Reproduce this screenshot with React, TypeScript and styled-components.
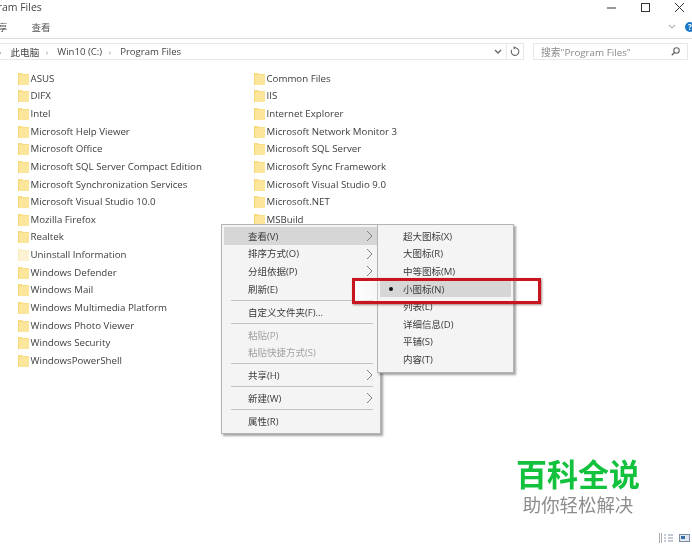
import styled, { createGlobalStyle } from "styled-components";

const leftFolders = [
  "ASUS",
  "DIFX",
  "Intel",
  "Microsoft Help Viewer",
  "Microsoft Office",
  "Microsoft SQL Server Compact Edition",
  "Microsoft Synchronization Services",
  "Microsoft Visual Studio 10.0",
  "Mozilla Firefox",
  "Realtek",
  "Uninstall Information",
  "Windows Defender",
  "Windows Mail",
  "Windows Multimedia Platform",
  "Windows Photo Viewer",
  "Windows Security",
  "WindowsPowerShell",
];

const rightFolders = [
  "Common Files",
  "IIS",
  "Internet Explorer",
  "Microsoft Network Monitor 3",
  "Microsoft SQL Server",
  "Microsoft Sync Framework",
  "Microsoft Visual Studio 9.0",
  "Microsoft.NET",
  "MSBuild",
];

type MenuEntry =
  | { kind: "item"; label: string; arrow?: boolean; disabled?: boolean; active?: boolean }
  | { kind: "sep" };

const mainMenu: MenuEntry[] = [
  { kind: "item", label: "查看(V)", arrow: true, active: true },
  { kind: "item", label: "排序方式(O)", arrow: true },
  { kind: "item", label: "分组依据(P)", arrow: true },
  { kind: "item", label: "刷新(E)" },
  { kind: "sep" },
  { kind: "item", label: "自定义文件夹(F)..." },
  { kind: "sep" },
  { kind: "item", label: "粘贴(P)", disabled: true },
  { kind: "item", label: "粘贴快捷方式(S)", disabled: true },
  { kind: "sep" },
  { kind: "item", label: "共享(H)", arrow: true },
  { kind: "sep" },
  { kind: "item", label: "新建(W)", arrow: true },
  { kind: "sep" },
  { kind: "item", label: "属性(R)" },
];

const subMenu = [
  "超大图标(X)",
  "大图标(R)",
  "中等图标(M)",
  "小图标(N)",
  "列表(L)",
  "详细信息(D)",
  "平铺(S)",
  "内容(T)",
];

const GlobalStyle = createGlobalStyle`
  html, body {
    margin: 0;
    padding: 0;
    background: #fff;
  }
  body {
    font-family: "Open Sans", "Noto Sans CJK SC", sans-serif;
    color: #333;
  }
`;

const Page = styled.div`
  position: relative;
  width: 692px;
  height: 548px;
  overflow: hidden;
  background: #fff;
  filter: blur(0.35px);
`;

const TitleBar = styled.div`
  display: flex;
  align-items: center;
  justify-content: space-between;
  height: 14px;
  padding-right: 8px;
`;

const Title = styled.div`
  margin-left: -25px;
  font-size: 10.5px;
  color: #444;
`;

const WindowButtons = styled.div`
  display: flex;
  align-items: center;
  gap: 25px;
  color: #333;
`;

const RibbonTabs = styled.div`
  display: flex;
  align-items: center;
  justify-content: space-between;
  height: 25px;
  padding-top: 1px;
  box-sizing: border-box;
  border-bottom: 1px solid #dcdcdc;
`;

const TabGroup = styled.div`
  display: flex;
  gap: 24px;
  margin-left: -2px;
  font-size: 9.5px;
  color: #555;
`;

const HelpGroup = styled.div`
  display: flex;
  align-items: center;
  gap: 9px;
  margin-right: -3px;
`;

const HelpBadge = styled.div`
  width: 10px;
  height: 10px;
  border-radius: 50%;
  background: #1877c9;
  color: #fff;
  font-size: 8px;
  font-weight: 700;
  line-height: 10px;
  text-align: center;
`;

const NavRow = styled.div`
  display: flex;
  align-items: stretch;
  gap: 9px;
  height: 17px;
  margin-top: 4px;
  padding-right: 4px;
`;

const AddressBar = styled.div`
  flex: 1;
  display: flex;
  align-items: center;
  border: 1px solid #e8e8e8;
  border-left: none;
  font-size: 9.6px;
  color: #444;
`;

const Crumbs = styled.div`
  flex: 1;
  display: flex;
  align-items: center;
  gap: 7.5px;
`;

const CrumbArrow = styled.span`
  width: 4px;
  margin-left: -1px;
  color: #888;
  font-size: 8px;
`;

const AddressTools = styled.div`
  display: flex;
  align-items: center;
  height: 100%;
  color: #666;
`;

const AddressTool = styled.div<{ $divided?: boolean }>`
  display: flex;
  align-items: center;
  justify-content: center;
  width: 16px;
  height: 100%;
  border-left: ${(p) => (p.$divided ? "1px solid #e8e8e8" : "none")};
`;

const SearchBox = styled.div`
  display: flex;
  align-items: center;
  justify-content: space-between;
  width: 155px;
  padding: 0 7px;
  box-sizing: border-box;
  border: 1px solid #e8e8e8;
  font-size: 9.8px;
  color: #8a8a8a;
`;

const FileArea = styled.div`
  display: grid;
  grid-template-columns: 236px 236px;
  padding: 9.5px 0 0 18px;
`;

const FileColumn = styled.div`
  display: flex;
  flex-direction: column;
`;

const FileRow = styled.div<{ $faded?: boolean }>`
  display: flex;
  align-items: center;
  gap: 1.5px;
  height: 17.625px;
  font-size: 9.7px;
  color: #3c3c3c;
  white-space: nowrap;

  svg {
    opacity: ${(p) => (p.$faded ? 0.45 : 1)};
  }
`;

const Menu = styled.div`
  position: absolute;
  box-sizing: border-box;
  background: #f4f4f4;
  border: 1px solid #b4b4b4;
  box-shadow: 2px 2px 2px rgba(90, 90, 90, 0.55);
  font-size: 9.5px;
  color: #3a3a3a;
`;

const ContextMenu = styled(Menu)`
  left: 221px;
  top: 224px;
  width: 160px;
  height: 210px;
  padding: 2px;
`;

const SubMenu = styled(Menu)`
  left: 377px;
  top: 224px;
  width: 137px;
  height: 149px;
  padding: 2px;
`;

const MenuItem = styled.div<{ $active?: boolean; $disabled?: boolean }>`
  position: relative;
  display: flex;
  align-items: center;
  height: 17.6px;
  padding-left: 24px;
  background: ${(p) => (p.$active ? "#d6d6d6" : "transparent")};
  color: ${(p) => (p.$disabled ? "#a2a2a2" : "inherit")};
`;

const Separator = styled.div`
  height: 1px;
  margin: 2.2px 5px 2.2px 7px;
  background: #c2c2c2;
`;

const Arrow = styled.svg`
  position: absolute;
  right: 5px;
  top: 3px;
`;

const SubItem = styled.div<{ $active?: boolean }>`
  position: relative;
  display: flex;
  align-items: center;
  height: 17.6px;
  padding-left: 23px;
  background: ${(p) => (p.$active ? "#d6d6d6" : "transparent")};
`;

const Bullet = styled.span`
  position: absolute;
  left: 9px;
  top: 7px;
  width: 4px;
  height: 4px;
  border-radius: 50%;
  background: #111;
`;

const Highlight = styled.div`
  position: absolute;
  left: 352px;
  top: 278px;
  width: 189px;
  height: 26px;
  box-sizing: border-box;
  border: 3px solid #c8141e;
  box-shadow: 1px 1px 2px rgba(110, 60, 60, 0.6);
  background: linear-gradient(to right, rgba(255, 255, 255, 0.75) 0, rgba(255, 255, 255, 0.3) 22px, transparent 24px);
`;

const Watermark = styled.div`
  position: absolute;
  left: 516px;
  top: 454px;
  width: 124px;
  text-align: center;
`;

const WatermarkTitle = styled.div`
  font-family: "Noto Sans CJK SC", sans-serif;
  font-size: 31px;
  font-weight: 700;
  line-height: 38px;
  color: #12c13c;
  white-space: nowrap;
`;

const WatermarkSub = styled.div`
  font-family: "Noto Sans CJK SC", sans-serif;
  font-size: 18.4px;
  line-height: 24px;
  color: #8d8d8d;
  white-space: nowrap;
`;

const StatusIcons = styled.div`
  position: absolute;
  right: 2px;
  top: 533px;
  display: flex;
  gap: 5px;
`;

const FolderIcon = () => (
  <svg width="11" height="13" viewBox="0 0 11 13">
    <path d="M0 1h4l1 1h6v11H0z" fill="#f9dd84" />
    <path d="M1 3h10v10H1z" fill="#fce69c" />
    <path d="M0 1h1v12H0z" fill="#f3d675" />
  </svg>
);

const FolderList = ({ names }: { names: string[] }) => (
  <FileColumn>
    {names.map((name) => (
      <FileRow key={name} $faded={name === "Uninstall Information"}>
        <FolderIcon />
        {name}
      </FileRow>
    ))}
  </FileColumn>
);

const Chevron = () => (
  <Arrow width="7" height="12" viewBox="0 0 7 12">
    <path d="M1 1l5 5-5 5" fill="none" stroke="#808080" strokeWidth="1" />
  </Arrow>
);

const App = () => {
  return (
    <Page>
      <GlobalStyle />
      <TitleBar>
        <Title>Program Files</Title>
        <WindowButtons>
          <svg width="9" height="9" viewBox="0 0 9 9">
            <path d="M0 5h9" stroke="#333" strokeWidth="1" />
          </svg>
          <svg width="9" height="9" viewBox="0 0 9 9">
            <rect x="0.5" y="0.5" width="8" height="8" fill="none" stroke="#333" />
          </svg>
          <svg width="9" height="9" viewBox="0 0 9 9">
            <path d="M0 0l9 9M9 0l-9 9" stroke="#333" strokeWidth="1" />
          </svg>
        </WindowButtons>
      </TitleBar>
      <RibbonTabs>
        <TabGroup>
          <span>享</span>
          <span>查看</span>
        </TabGroup>
        <HelpGroup>
          <svg width="8" height="5" viewBox="0 0 8 5">
            <path d="M1 1l3 3 3-3" fill="none" stroke="#bbb" strokeWidth="1.2" />
          </svg>
          <HelpBadge>?</HelpBadge>
        </HelpGroup>
      </RibbonTabs>
      <NavRow>
        <AddressBar>
          <Crumbs>
            <CrumbArrow>›</CrumbArrow>
            <span>此电脑</span>
            <CrumbArrow>›</CrumbArrow>
            <span>Win10 (C:)</span>
            <CrumbArrow>›</CrumbArrow>
            <span>Program Files</span>
          </Crumbs>
          <AddressTools>
            <AddressTool>
              <svg width="8" height="5" viewBox="0 0 8 5">
                <path d="M1 1l3 3 3-3" fill="none" stroke="#666" strokeWidth="1.3" />
              </svg>
            </AddressTool>
            <AddressTool $divided>
              <svg width="10" height="11" viewBox="0 0 10 11">
                <path d="M5 1.8a3.8 3.8 0 1 1-3.3 2" fill="none" stroke="#666" strokeWidth="1.1" />
                <path d="M3.6 0l2.4 1.8-2.4 1.8z" fill="#666" />
              </svg>
            </AddressTool>
          </AddressTools>
        </AddressBar>
        <SearchBox>
          <span>搜索"Program Files"</span>
          <svg width="9" height="9" viewBox="0 0 9 9">
            <circle cx="5.5" cy="3.5" r="2.7" fill="none" stroke="#666" strokeWidth="1.1" />
            <path d="M3.5 5.5L0.8 8.2" stroke="#666" strokeWidth="1.4" />
          </svg>
        </SearchBox>
      </NavRow>
      <FileArea>
        <FolderList names={leftFolders} />
        <FolderList names={rightFolders} />
      </FileArea>

      <ContextMenu>
        {mainMenu.map((entry, i) =>
          entry.kind === "sep" ? (
            <Separator key={i} />
          ) : (
            <MenuItem key={entry.label} $active={entry.active} $disabled={entry.disabled}>
              {entry.label}
              {entry.arrow && <Chevron />}
            </MenuItem>
          ),
        )}
      </ContextMenu>
      <SubMenu>
        {subMenu.map((label) => (
          <SubItem key={label} $active={label === "小图标(N)"}>
            {label === "小图标(N)" && <Bullet />}
            {label}
          </SubItem>
        ))}
      </SubMenu>
      <Highlight />

      <Watermark>
        <WatermarkTitle>百科全说</WatermarkTitle>
        <WatermarkSub>助你轻松解决</WatermarkSub>
      </Watermark>

      <StatusIcons>
        <svg width="15" height="10" viewBox="0 0 15 10">
          <path d="M0.5 0v10M2.5 0v10" stroke="#aaa" />
          <path d="M5 2h2M9 2h5M5 5h2M9 5h5M5 8h2M9 8h5" stroke="#8a97a8" />
        </svg>
        <svg width="11" height="10" viewBox="0 0 11 10">
          <rect x="0.5" y="1.5" width="10" height="7" fill="#dfe8f2" stroke="#7b8ea6" />
          <rect x="2" y="3" width="4" height="3" fill="#3a6ea5" />
        </svg>
      </StatusIcons>
    </Page>
  );
};

export default App;
